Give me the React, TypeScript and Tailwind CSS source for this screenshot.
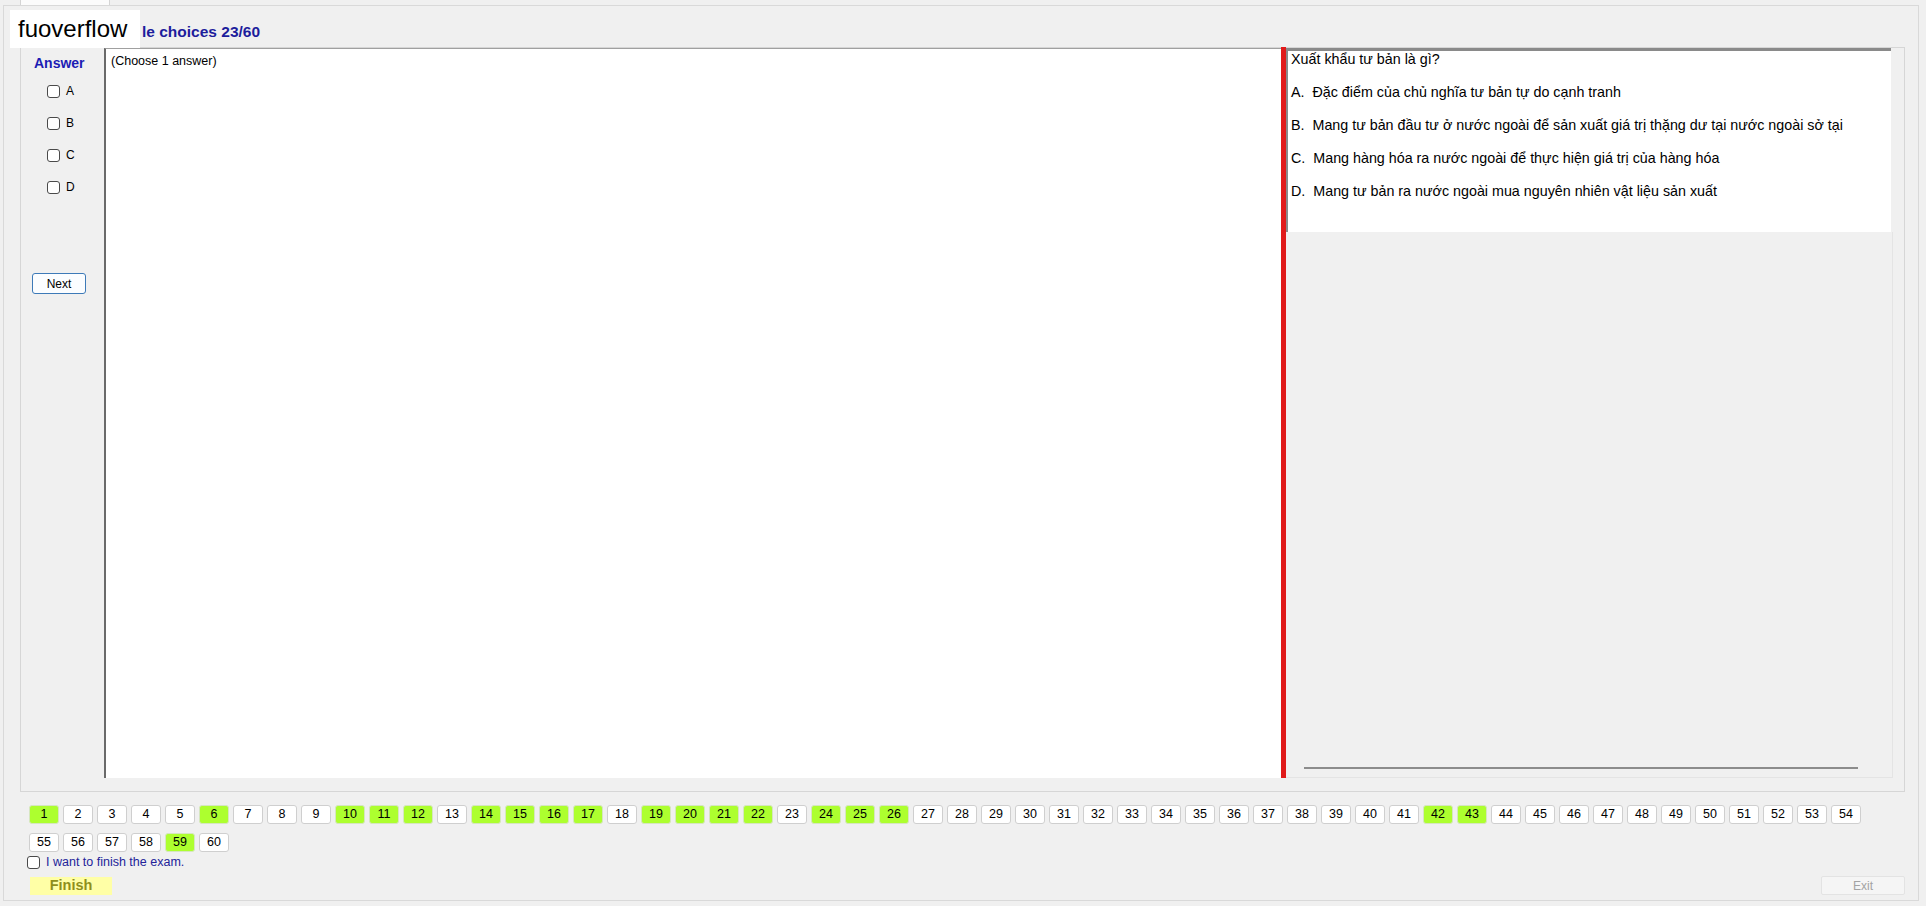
import React from "react";

const green = new Set([1, 6, 10, 11, 12, 14, 15, 16, 17, 19, 20, 21, 22, 24, 25, 26, 42, 43, 59]);

function NumBtn({ n }: { n: number }) {
  const g = green.has(n);
  return (
    <div
      className={
        g
          ? "w-[30px] h-[19px] flex items-center justify-center rounded-[3px] border border-[#d6e6c0] bg-[#adff2f] text-[12.5px] leading-none text-black"
          : "w-[30px] h-[19px] flex items-center justify-center rounded-[3px] border border-[#cfcfcf] bg-white text-[12.5px] leading-none text-black"
      }
    >
      {n}
    </div>
  );
}

function Box() {
  return <div className="w-[13px] h-[13px] rounded-[3px] border border-[#4a4a4a] bg-white shrink-0" />;
}

export default function App() {
  const row1 = Array.from({ length: 54 }, (_, i) => i + 1);
  const row2 = Array.from({ length: 6 }, (_, i) => i + 55);
  const options = [
    ["A.", "Đặc điểm của chủ nghĩa tư bản tự do cạnh tranh"],
    ["B.", "Mang tư bản đầu tư ở nước ngoài để sản xuất giá trị thặng dư tại nước ngoài sở tại"],
    ["C.", "Mang hàng hóa ra nước ngoài để thực hiện giá trị của hàng hóa"],
    ["D.", "Mang tư bản ra nước ngoài mua nguyên nhiên vật liệu sản xuất"],
  ];
  return (
    <div className="relative w-[1926px] h-[906px] bg-[#f0f0f0] overflow-hidden font-['Liberation_Sans',Arial,sans-serif] text-black">
      {/* tab strip */}
      <div className="h-[5px] flex">
        <div className="ml-[20px] w-[90px] h-[5px] bg-[#fbfbfb] border-x border-[#d4d4d4]" />
      </div>
      {/* tab page */}
      <div className="ml-[3px] w-[1916px] h-[896px] border border-[#d9d9d9] flex flex-col">
        <div className="h-[41px] pl-[138px] pt-[17px] text-[15.5px] leading-[18px] font-bold text-[#1d1d9c] whitespace-nowrap">
          le choices 23/60
        </div>
        {/* group box */}
        <div className="ml-[16px] w-[1885px] h-[745px] border border-[#d6d6d6] flex">
          {/* left column */}
          <div className="w-[83px] flex flex-col">
            <div className="mt-[7px] h-[16px] leading-[16px] text-[14px] font-bold text-[#1c1cb4] pl-[13px]">Answer</div>
            <div className="mt-[14px] flex flex-col gap-[19px] pl-[26px]">
              {["A", "B", "C", "D"].map((l) => (
                <div key={l} className="flex items-center h-[13px] gap-[6px] text-[12px] leading-[13px]">
                  <Box />
                  <span>{l}</span>
                </div>
              ))}
            </div>
            <div className="mt-[79px] ml-[11px] w-[54px] h-[21px] rounded-[3px] border border-[#3d7ab8] bg-[#fbfdff] flex items-center justify-center text-[12px]">
              Next
            </div>
          </div>
          {/* answer panel */}
          <div className="w-[1177px] h-[730px] bg-white border-l-2 border-l-[#6a6a6a] border-t border-t-[#a0a0a0] pl-[5px] pt-[4px] text-[12.5px] leading-[16px]">
            (Choose 1 answer)
          </div>
          {/* red splitter */}
          <div className="w-[5px] h-[731px] -mt-px bg-[#e01a1a]" />
          {/* question area */}
          <div className="w-[609px] h-[730px] flex flex-col">
            <div className="w-[605px] h-[184px] bg-white border-t-[3px] border-t-[#8a8a8a] border-l-2 border-l-[#8a8a8a] pl-[3px] flex flex-col gap-[17px] text-[14.3px] leading-[16px] whitespace-nowrap">
              <div>Xuất khẩu tư bản là gì?</div>
              {options.map(([k, t]) => (
                <div key={k} className="whitespace-pre">
                  {k}  {t}
                </div>
              ))}
            </div>
            <div className="w-[607px] flex-1 border-r border-b border-[#e4e4e4] flex flex-col justify-end">
              <div className="ml-[18px] w-[554px] h-[2px] bg-[#8c8c8c] mb-[8px]" />
            </div>
          </div>
        </div>
        {/* question numbers */}
        <div className="mt-[13px] ml-[25px] w-[1832px] flex flex-wrap gap-x-[4px] gap-y-[9px]">
          {row1.map((n) => (
            <NumBtn key={n} n={n} />
          ))}
          {row2.map((n) => (
            <NumBtn key={n} n={n} />
          ))}
        </div>
        <div className="mt-[4px] ml-[23px] flex items-center gap-[6px] h-[13px]">
          <Box />
          <span className="text-[12.5px] leading-[13px] text-[#23239a]">I want to finish the exam.</span>
        </div>
        <div className="mt-[7px] flex items-center justify-between pl-[26px] pr-[13px]">
          <div className="w-[82px] h-[18px] bg-[#ffffa6] flex items-center justify-center text-[14.5px] font-bold text-[#8f8f1c] leading-none">
            Finish
          </div>
          <div className="w-[84px] h-[19px] rounded-[2px] border border-[#e3e3e3] bg-[#f5f5f5] flex items-center justify-center text-[12px] text-[#a3a3a3] leading-none">
            Exit
          </div>
        </div>
      </div>
      {/* watermark overlay */}
      <div className="absolute left-[10px] top-[10px] w-[130px] h-[38px] bg-white flex items-center pl-[8px] text-[24px] leading-none text-black">
        fuoverflow
      </div>
    </div>
  );
}
